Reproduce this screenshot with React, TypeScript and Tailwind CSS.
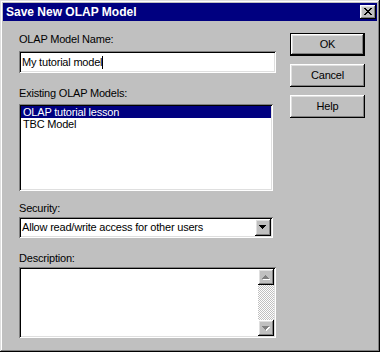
import React from 'react'

// classic 3D edge styles
const raised =
  'shadow-[inset_-1px_-1px_0_#000,inset_1px_1px_0_#fff,inset_-2px_-2px_0_#808080,inset_2px_2px_0_#dfdfdf]'
const sunken =
  'shadow-[inset_1px_1px_0_#808080,inset_-1px_-1px_0_#fff,inset_2px_2px_0_#000,inset_-2px_-2px_0_#dfdfdf]'

function Pixels({ rows, color, dx = 0, dy = 0 }: { rows: string[]; color: string; dx?: number; dy?: number }) {
  const rects: React.ReactNode[] = []
  rows.forEach((row, y) =>
    row.split('').forEach((c, x) => {
      if (c === '#') rects.push(<rect key={`${x}-${y}`} x={x + dx} y={y + dy} width={1} height={1} fill={color} />)
    })
  )
  return <>{rects}</>
}

const closeX = ['##....##', '.##..##.', '..####..', '...##...', '..####..', '.##..##.', '##....##']
const down = ['#######', '.#####.', '..###..', '...#...']
const up = ['...#...', '..###..', '.#####.', '#######']

function Arrow({ rows, disabled }: { rows: string[]; disabled?: boolean }) {
  return (
    <svg width={8} height={5} shapeRendering="crispEdges">
      {disabled && <Pixels rows={rows} color="#fff" dx={1} dy={1} />}
      <Pixels rows={rows} color={disabled ? '#808080' : '#000'} />
    </svg>
  )
}

function Button({ label, isDefault }: { label: string; isDefault?: boolean }) {
  return (
    <div className={`h-[23px] w-[75px] ${isDefault ? 'border border-black' : ''}`}>
      <div className={`h-full w-full flex items-center justify-center bg-[#c0c0c0] ${raised}`}>{label}</div>
    </div>
  )
}

export default function App() {
  return (
    <div className="w-[380px] h-[352px] bg-[#c0c0c0] p-[3px] flex flex-col font-['Liberation_Sans',Arial,sans-serif] text-[11px] leading-[13px] tracking-[-0.2px] text-black shadow-[inset_-1px_-1px_0_#000,inset_1px_1px_0_#dfdfdf,inset_-2px_-2px_0_#808080,inset_2px_2px_0_#fff]">
      {/* title bar */}
      <div className="h-[18px] bg-[#000080] flex items-center justify-between pl-[3px] pr-[1px]">
        <span className="text-white font-bold text-[12px] leading-[14px] tracking-normal">Save New OLAP Model</span>
        <div className={`w-[16px] h-[14px] bg-[#c0c0c0] flex items-center justify-center ${raised}`}>
          <svg width={8} height={7} shapeRendering="crispEdges" className="-mt-[1px]">
            <Pixels rows={closeX} color="#000" />
          </svg>
        </div>
      </div>

      <div className="flex pt-[12px] pl-[16px]">
        {/* fields */}
        <div className="flex flex-col w-[257px]">
          <div className="h-[13px]">OLAP Model Name:</div>
          <div className={`mt-[5px] h-[22px] w-[257px] bg-white flex items-center pl-[3px] ${sunken}`}>
            <span>My tutorial model</span>
            <span className="w-px h-[13px] bg-black"></span>
          </div>

          <div className="mt-[14px] h-[13px]">Existing OLAP Models:</div>
          <div className={`mt-[4px] h-[87px] w-[254px] bg-white p-[2px] ${sunken}`}>
            <div className="h-[12px] leading-[12px] bg-[#000080] text-white pl-[2px]">OLAP tutorial lesson</div>
            <div className="h-[12px] leading-[12px] pl-[2px]">TBC Model</div>
          </div>

          <div className="mt-[11px] h-[13px]">Security:</div>
          <div className={`mt-[2px] h-[21px] w-[254px] bg-white flex items-center p-[2px] ${sunken}`}>
            <span className="flex-1 pl-[1px]">Allow read/write access for other users</span>
            <div className={`w-[16px] h-full bg-[#c0c0c0] flex items-center justify-center ${raised}`}>
              <Arrow rows={down} />
            </div>
          </div>

          <div className="mt-[14px] h-[13px]">Description:</div>
          <div className={`mt-[2px] h-[71px] w-[257px] bg-white flex justify-end p-[2px] ${sunken}`}>
            <div className="w-[16px] h-full flex flex-col">
              <div className={`h-[16px] bg-[#c0c0c0] flex items-center justify-center ${raised}`}>
                <Arrow rows={up} disabled />
              </div>
              <div className="flex-1 bg-[repeating-conic-gradient(#c0c0c0_0%_25%,#ffffff_0%_50%)] bg-[length:2px_2px]"></div>
              <div className={`h-[16px] bg-[#c0c0c0] flex items-center justify-center ${raised}`}>
                <Arrow rows={down} disabled />
              </div>
            </div>
          </div>
        </div>

        {/* buttons */}
        <div className="flex flex-col gap-[8px] ml-[14px]">
          <Button label="OK" isDefault />
          <Button label="Cancel" />
          <Button label="Help" />
        </div>
      </div>
    </div>
  )
}
